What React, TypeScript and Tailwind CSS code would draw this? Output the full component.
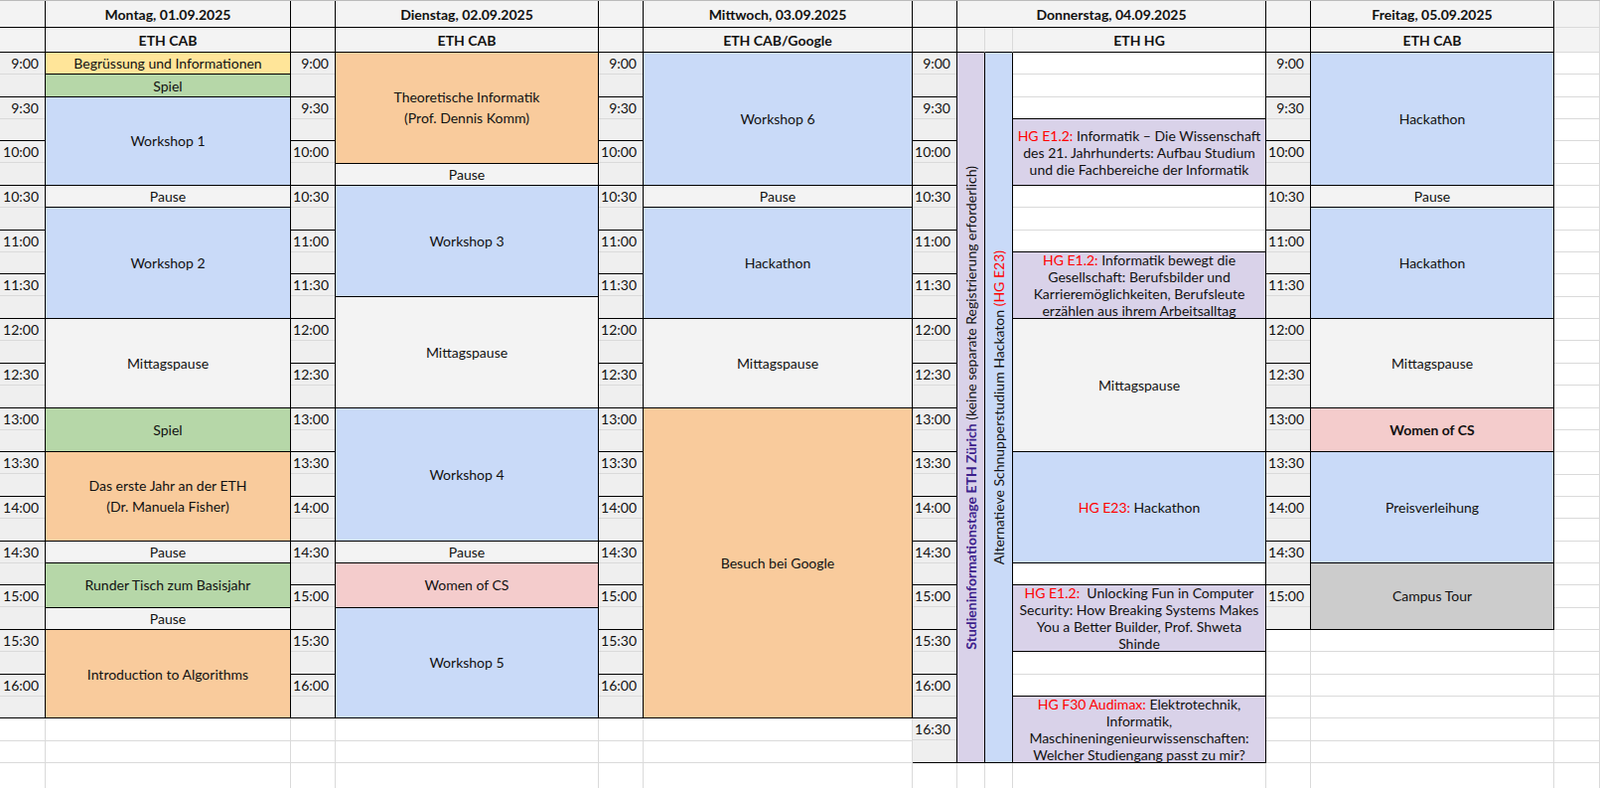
import type { ReactNode } from "react";

type Ev = {
    c: number;
    r: number;
    s: number;
    bg: string;
    body: ReactNode;
    cls?: string;
};

const COLS = 13;
const ROWS = 33; // 32 quarter-hour slots + trailing row

const ARIAL = "[font-family:'Liberation_Sans',Arial,sans-serif] leading-[17px]";

const red = (t: string) => <span className="text-[#ff0000]">{t}</span>;

const events: Ev[] = [
    // Montag
    { c: 1, r: 0, s: 1, bg: "bg-[#ffe599]", body: "Begrüssung und Informationen" },
    { c: 1, r: 1, s: 1, bg: "bg-[#b6d7a8]", body: "Spiel" },
    { c: 1, r: 2, s: 4, bg: "bg-[#c9daf8]", body: "Workshop 1" },
    { c: 1, r: 6, s: 1, bg: "bg-[#f3f3f3]", body: "Pause" },
    { c: 1, r: 7, s: 5, bg: "bg-[#c9daf8]", body: "Workshop 2" },
    { c: 1, r: 12, s: 4, bg: "bg-[#f3f3f3]", body: "Mittagspause" },
    { c: 1, r: 16, s: 2, bg: "bg-[#b6d7a8]", body: "Spiel" },
    { c: 1, r: 18, s: 4, bg: "bg-[#f9cb9c]", body: <>Das erste Jahr an der ETH<br />(Dr. Manuela Fisher)</> },
    { c: 1, r: 22, s: 1, bg: "bg-[#f3f3f3]", body: "Pause" },
    { c: 1, r: 23, s: 2, bg: "bg-[#b6d7a8]", body: "Runder Tisch zum Basisjahr" },
    { c: 1, r: 25, s: 1, bg: "bg-[#f3f3f3]", body: "Pause" },
    { c: 1, r: 26, s: 4, bg: "bg-[#f9cb9c]", body: "Introduction to Algorithms" },
    // Dienstag
    { c: 3, r: 0, s: 5, bg: "bg-[#f9cb9c]", body: <>Theoretische Informatik<br />(Prof. Dennis Komm)</> },
    { c: 3, r: 5, s: 1, bg: "bg-[#f3f3f3]", body: "Pause" },
    { c: 3, r: 6, s: 5, bg: "bg-[#c9daf8]", body: "Workshop 3" },
    { c: 3, r: 11, s: 5, bg: "bg-[#f3f3f3]", body: "Mittagspause" },
    { c: 3, r: 16, s: 6, bg: "bg-[#c9daf8]", body: "Workshop 4" },
    { c: 3, r: 22, s: 1, bg: "bg-[#f3f3f3]", body: "Pause" },
    { c: 3, r: 23, s: 2, bg: "bg-[#f4cccc]", body: "Women of CS" },
    { c: 3, r: 25, s: 5, bg: "bg-[#c9daf8]", body: "Workshop 5" },
    // Mittwoch
    { c: 5, r: 0, s: 6, bg: "bg-[#c9daf8]", body: "Workshop 6" },
    { c: 5, r: 6, s: 1, bg: "bg-[#f3f3f3]", body: "Pause" },
    { c: 5, r: 7, s: 5, bg: "bg-[#c9daf8]", body: "Hackathon" },
    { c: 5, r: 12, s: 4, bg: "bg-[#f3f3f3]", body: "Mittagspause" },
    { c: 5, r: 16, s: 14, bg: "bg-[#f9cb9c]", body: "Besuch bei Google" },
    // Donnerstag
    {
        c: 9, r: 3, s: 3, bg: "bg-[#d9d2e9]", cls: ARIAL,
        body: <>{red("HG E1.2:")} Informatik – Die Wissenschaft des 21. Jahrhunderts: Aufbau Studium und die Fachbereiche der Informatik</>,
    },
    {
        c: 9, r: 9, s: 3, bg: "bg-[#d9d2e9]", cls: ARIAL,
        body: <>{red("HG E1.2:")} Informatik bewegt die Gesellschaft: Berufsbilder und Karrieremöglichkeiten, Berufsleute erzählen aus ihrem Arbeitsalltag</>,
    },
    { c: 9, r: 12, s: 6, bg: "bg-[#f3f3f3]", body: "Mittagspause" },
    { c: 9, r: 18, s: 5, bg: "bg-[#c9daf8]", cls: ARIAL, body: <>{red("HG E23:")} Hackathon</> },
    {
        c: 9, r: 24, s: 3, bg: "bg-[#d9d2e9]", cls: ARIAL,
        body: <>{red("HG E1.2:")}&nbsp; Unlocking Fun in Computer Security: How Breaking Systems Makes You a Better Builder, Prof. Shweta Shinde</>,
    },
    {
        c: 9, r: 29, s: 3, bg: "bg-[#d9d2e9]", cls: ARIAL,
        body: <>{red("HG F30 Audimax:")} Elektrotechnik, Informatik, Maschineningenieurwissenschaften: Welcher Studiengang passt zu mir?</>,
    },
    // Freitag
    { c: 11, r: 0, s: 6, bg: "bg-[#c9daf8]", body: "Hackathon" },
    { c: 11, r: 6, s: 1, bg: "bg-[#f3f3f3]", body: "Pause" },
    { c: 11, r: 7, s: 5, bg: "bg-[#c9daf8]", body: "Hackathon" },
    { c: 11, r: 12, s: 4, bg: "bg-[#f3f3f3]", body: "Mittagspause" },
    { c: 11, r: 16, s: 2, bg: "bg-[#f4cccc]", cls: "font-bold", body: "Women of CS" },
    { c: 11, r: 18, s: 5, bg: "bg-[#c9daf8]", body: "Preisverleihung" },
    { c: 11, r: 23, s: 3, bg: "bg-[#cccccc]", body: "Campus Tour" },
];

// Thursday blank (white, bordered) blocks
const thuBlank: [number, number][] = [[0, 3], [6, 3], [23, 1], [27, 2]];

const timeCols: { c: number; last: number }[] = [
    { c: 0, last: 28 },
    { c: 2, last: 28 },
    { c: 4, last: 28 },
    { c: 6, last: 30 },
    { c: 10, last: 24 },
];

const label = (r: number) => {
    const m = 9 * 60 + r * 15;
    return `${Math.floor(m / 60)}:${m % 60 === 0 ? "00" : "30"}`;
};

// grid placement comes from the schedule data
const place = (c: number, r: number, s = 1, cs = 1) => ({
    gridColumn: `${c + 1} / span ${cs}`,
    gridRow: `${r} / span ${s}`,
});

export default function App() {
    const bgCells: ReactNode[] = [];
    for (let r = 1; r <= ROWS + 2; r++) {
        for (let c = 0; c < COLS; c++) {
            bgCells.push(
                <div key={`g${r}-${c}`} style={place(c, r)} className="border-r border-b border-[#dadada]" />
            );
        }
    }

    const days: [number, number, string, string][] = [
        [1, 1, "Montag, 01.09.2025", "ETH CAB"],
        [3, 1, "Dienstag, 02.09.2025", "ETH CAB"],
        [5, 1, "Mittwoch, 03.09.2025", "ETH CAB/Google"],
        [7, 3, "Donnerstag, 04.09.2025", ""],
        [11, 1, "Freitag, 05.09.2025", "ETH CAB"],
    ];

    return (
        <div className="h-[793px] w-[1611px] overflow-hidden bg-white [font-family:Lato,sans-serif] text-[14px] text-[#111]">
            <div className="grid grid-cols-[46px_247px_45px_265px_45px_271px_45px_28px_28px_255px_45px_245px_46px] grid-rows-[27px_25px_repeat(32,22.35px)_26px] border-t border-[#bbb]">
                {bgCells}

                {/* Header grey cells */}
                {Array.from({ length: COLS }).map((_, c) => (
                    <div key={`h${c}`} style={place(c, 1)} className={`bg-[#f3f3f3] border-b border-r ${c === 12 ? "border-[#dadada]" : "border-black"}`} />
                ))}
                {Array.from({ length: COLS }).map((_, c) => (
                    <div key={`l${c}`} style={place(c, 2)} className={`bg-[#f3f3f3] border-b border-r ${c === 12 ? "border-[#dadada]" : c === 7 || c === 8 ? "border-[#dadada] border-b-black" : "border-black"}`} />
                ))}
                {days.map(([c, cs, d]) => (
                    <div key={d} style={place(c, 1, 1, cs)} className="flex items-center justify-center border-r border-b border-black bg-[#f3f3f3] font-bold">
                        {d}
                    </div>
                ))}
                {days.filter((d) => d[3]).map(([c, , d, loc]) => (
                    <div key={`loc${d}`} style={place(c, 2)} className="flex items-center justify-center border-r border-b border-black bg-[#f3f3f3] font-bold">
                        {loc}
                    </div>
                ))}
                <div style={place(9, 2)} className="flex items-center justify-center border-r border-b border-black bg-[#f3f3f3] font-bold">
                    ETH HG
                </div>

                {/* Time columns */}
                {timeCols.flatMap(({ c, last }) =>
                    Array.from({ length: last / 2 + 1 }).map((_, i) => {
                        const r = i * 2;
                        return (
                            <div key={`t${c}-${r}`} style={place(c, r + 3, 2)} className="flex flex-col border-r border-b border-black bg-[#efefef]">
                                <div className="flex h-[22px] items-center justify-end border-b border-[#dadada] pr-[6px]">{label(r)}</div>
                            </div>
                        );
                    })
                )}

                {/* Thursday vertical bands */}
                <div style={place(7, 3, 32)} className="flex items-center justify-center border-r border-b border-black bg-[#d9d2e9]">
                    <div className="rotate-180 whitespace-nowrap [font-family:'Liberation_Sans',Arial,sans-serif] text-[14px] [writing-mode:vertical-rl]">
                        <span className="font-bold text-[#3d1f8c]">Studieninformationstage ETH Zürich</span> (keine separate Registrierung erforderlich)
                    </div>
                </div>
                <div style={place(8, 3, 32)} className="flex items-center justify-center border-r border-b border-black bg-[#c9daf8]">
                    <div className="rotate-180 whitespace-nowrap [font-family:'Liberation_Sans',Arial,sans-serif] text-[14px] [writing-mode:vertical-rl]">
                        Alternatieve Schnupperstudium Hackaton {red("(HG E23)")}
                    </div>
                </div>

                {thuBlank.map(([r, s]) => (
                    <div key={`b${r}`} style={place(9, r + 3, s)} className="border-r border-b border-black" />
                ))}

                {events.map((e, i) => (
                    <div
                        key={i}
                        style={place(e.c, e.r + 3, e.s)}
                        className={`flex items-center justify-center overflow-hidden border-r border-b border-black px-1 text-center ${e.bg} ${e.cls ?? ""}`}
                    >
                        <div>{e.body}</div>
                    </div>
                ))}
            </div>
        </div>
    );
}
